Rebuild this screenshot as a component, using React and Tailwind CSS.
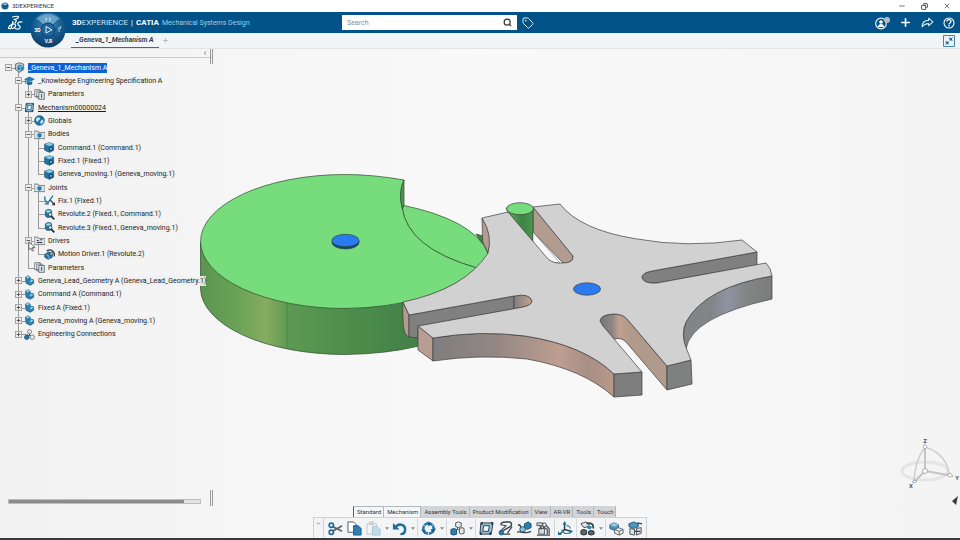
import { ChevronDown, ChevronLeft, Copy, Minus, Plus, Search, Tag, X } from "lucide-react";

const tree = {
  label: "_Geneva_1_Mechanism A",
  icon: "product",
  selected: true,
  children: [
    {
      label: "_Knowledge Engineering Specification A",
      icon: "knowledge",
      children: [{ label: "Parameters", icon: "params", closed: true }],
    },
    {
      label: "Mechanism00000024",
      icon: "mechanism",
      underline: true,
      children: [
        { label: "Globals", icon: "globe", closed: true },
        {
          label: "Bodies",
          icon: "folder",
          children: [
            { label: "Command.1 (Command.1)", icon: "body" },
            { label: "Fixed.1 (Fixed.1)", icon: "body" },
            { label: "Geneva_moving.1 (Geneva_moving.1)", icon: "body" },
          ],
        },
        {
          label: "Joints",
          icon: "folder",
          children: [
            { label: "Fix.1 (Fixed.1)", icon: "fix" },
            { label: "Revolute.2 (Fixed.1, Command.1)", icon: "revolute" },
            { label: "Revolute.3 (Fixed.1, Geneva_moving.1)", icon: "revolute" },
          ],
        },
        {
          label: "Drivers",
          icon: "drivers",
          children: [{ label: "Motion Driver.1 (Revolute.2)", icon: "motor" }],
        },
        { label: "Parameters", icon: "params" },
      ],
    },
    { label: "Geneva_Lead_Geometry A (Geneva_Lead_Geometry.1)", icon: "part", closed: true },
    { label: "Command A (Command.1)", icon: "part", closed: true },
    { label: "Fixed A (Fixed.1)", icon: "part", closed: true },
    { label: "Geneva_moving A (Geneva_moving.1)", icon: "part", closed: true },
    { label: "Engineering Connections", icon: "connections", closed: true },
  ],
};

// Walk the tree into rows. "guides" says, per level, if the line goes on below the row.
const flatten = (node, guides = []) => [
  { ...node, guides },
  ...(node.children || []).flatMap((child, i) =>
    flatten(child, [...guides, i < node.children.length - 1])
  ),
];

const rows = flatten(tree);

const treeIcons = {
  product: (
    <>
      <path d="M2 3 8 1l6 2v8l-6 4-6-4z" fill="#c3cdd4" stroke="#38434b" />
      <path d="M5 5l4-1 4 2v5l-4 2-4-2z" fill="#1f7eb0" />
      <path d="M5 5l4 2 4-1M9 7v6" stroke="#b5e0f2" fill="none" />
    </>
  ),
  knowledge: (
    <>
      <path d="M0 6 8 2l8 4-8 4z" fill="#1f7fb2" />
      <path d="M4 9v4c2 2 6 2 8 0V9l-4 2z" fill="#155f8a" />
      <path d="M2 7v6" stroke="#155f8a" />
    </>
  ),
  params: (
    <>
      <path d="M1 1h8v10H1zM4 3h8v10H4z" fill="#f3f3f3" stroke="#4d565c" />
      <path d="M7 5h8v10H7z" fill="#e8edf0" stroke="#38434b" />
      <path d="M10 7h2v6h-2z" fill="#1f7fb2" />
    </>
  ),
  mechanism: (
    <>
      <path d="M3 2h11l-1 12H2z" fill="#7ab9d8" stroke="#263640" />
      <path d="M6 5h5l-1 6H5z" fill="#f5f5f5" stroke="#1c5f88" />
      <path d="M3 2h2v2H3zM12 2h2v2h-2zM2 12h2v2H2zM11 12h2v2h-2z" fill="#263640" />
    </>
  ),
  globe: (
    <>
      <circle cx="8" cy="8" r="7" fill="#1c74a5" stroke="#134c6e" />
      <path d="M3 5c3-3 5-2 6 0s-3 2-3 4-2 1-3-1zM9 9l4-3 1 4-4 4z" fill="#bfe1f0" />
    </>
  ),
  folder: (
    <>
      <path d="M0 3h6l1 2h9v9H0z" fill="#dde1e4" stroke="#596167" />
      <path d="M5 7l3-1 3 1v4l-3 2-3-2z" fill="#1f7fb2" />
    </>
  ),
  drivers: (
    <>
      <path d="M0 3h6l1 2h9v9H0z" fill="#dde1e4" stroke="#596167" />
      <path d="M4 8h3M9 7h3M4 11h8" stroke="#333d44" strokeWidth="1.5" />
    </>
  ),
  body: (
    <>
      <path d="M1 3 8 1l6 2v9l-6 3-7-3z" fill="#1f78a8" stroke="#174c69" />
      <path d="M1 3l7 3 6-3-6-2z" fill="#8fcbe4" />
      <path d="M8 6v9" stroke="#174c69" />
      <circle cx="10" cy="10" r="2.500" fill="#6fb2d2" stroke="#132733" strokeWidth="1.200" />
    </>
  ),
  fix: (
    <>
      <path d="M1 2c0 6 2 9 6 9M6 11 13 1" stroke="#1f78a8" strokeWidth="2" fill="none" />
      <path d="M1 13h6" stroke="#174c69" strokeWidth="1.600" />
      <path d="M9 7l5 6" stroke="#263640" strokeWidth="1.800" />
      <path d="M11 15h5v-5z" fill="#263640" />
    </>
  ),
  revolute: (
    <>
      <path d="M2 3c2-3 8-3 9 0v7c-2 3-7 3-9 0z" fill="#1f78a8" stroke="#174c69" />
      <ellipse cx="6.500" cy="3.500" rx="3.500" ry="1.800" fill="#a8d7eb" />
      <circle cx="9" cy="8" r="2.500" fill="#e8f2f7" stroke="#1b2a33" />
      <path d="M10 10l5 5" stroke="#1b2a33" strokeWidth="2.400" />
    </>
  ),
  motor: (
    <>
      <path d="M1 8l6-4 5 3v5l-6 3-5-3z" fill="#1f78a8" stroke="#174c69" />
      <path d="M4 3c4-3 9-2 11 3v5" stroke="#263640" strokeWidth="1.800" fill="none" />
      <circle cx="11" cy="7" r="2.500" fill="#a9b4ba" stroke="#263640" />
      <path d="M3 8l4 2v4" stroke="#8fcbe4" fill="none" />
    </>
  ),
  part: (
    <>
      <path d="M2 3l4-2 3 2v3l5 1v5l-5 3-6-3z" fill="#2a80af" stroke="#1f5a7c" />
      <path d="M2 3l4-2 3 2-4 2zM8 9l3-2 3 1-4 3z" fill="#8fcbe4" />
    </>
  ),
  connections: (
    <>
      <path d="M8 5v4M8 9l-4 2M8 9l4 2" stroke="#4d565c" strokeWidth="1.500" />
      <circle cx="8" cy="4" r="3" fill="#e3e8eb" stroke="#59646b" />
      <circle cx="4" cy="12" r="3.300" fill="#1f78a8" stroke="#174c69" />
      <circle cx="12" cy="12" r="3.300" fill="#e3e8eb" stroke="#59646b" />
    </>
  ),
};

const TreeRow = ({ row }) => {
  const level = row.guides.length;
  const hasToggle = row.children || row.closed;

  return (
    <li className="flex items-stretch" role="treeitem" aria-level={level + 1}>
      {/* Guide lines of the parents */}
      {Array.from({ length: level }).map((_, i) => (
        <span key={i} className="relative w-[10px] shrink-0">
          {i > 0 && row.guides[i - 1] && (
            <span className="absolute inset-y-0 left-[5px] w-px bg-[#9a9a9a]" />
          )}
        </span>
      ))}
      <span className="relative flex w-[10px] shrink-0 items-center justify-center">
        {level > 0 && <span className="absolute top-0 left-[5px] h-1/2 w-px bg-[#9a9a9a]" />}
        {level > 0 && row.guides[level - 1] && (
          <span className="absolute bottom-0 left-[5px] h-1/2 w-px bg-[#9a9a9a]" />
        )}
        <span className="absolute top-1/2 left-[5px] h-px w-[10px] bg-[#9a9a9a]" />
        {hasToggle && (
          <button
            aria-label={row.closed ? `Expand ${row.label}` : `Collapse ${row.label}`}
            className="relative flex size-[7px] shrink-0 items-center justify-center border border-[#a5a5a5] bg-[#ececec] text-[#444]"
          >
            {row.closed ? <Plus className="size-[5px]" strokeWidth={4} /> : <Minus className="size-[5px]" strokeWidth={4} />}
          </button>
        )}
      </span>
      <span className="relative flex items-center gap-[3px] pl-[1px]">
        {row.children && (
          <span className="absolute bottom-0 left-[5px] h-1/2 w-px bg-[#9a9a9a]" />
        )}
        <svg viewBox="0 0 16 16" className="relative size-[11px] shrink-0" fill="none">
          {treeIcons[row.icon]}
        </svg>
        <span
          className={`text-[7px] leading-[10px] whitespace-nowrap ${
            row.selected ? "bg-[#0a64d8] text-white" : "bg-[#f1f1f1]/90 text-[#1d1d1d]"
          } ${row.underline ? "underline" : ""}`}
        >
          {row.label}
        </span>
      </span>
    </li>
  );
};

const ModelTree = () => (
  <aside className="relative flex w-[213px] flex-col">
    <div className="flex h-[9px] items-center justify-end border-b border-[#c9c9c9] pr-[5px]">
      <button aria-label="Hide tree">
        <ChevronLeft className="size-[6px] text-[#666]" strokeWidth={3} />
      </button>
    </div>
    <span className="absolute top-0 right-0 h-[15px] w-[3px] border-x border-[#9a9a9a]" />
    <ul role="tree" className="mt-[3px] ml-[3px] grid h-[280px] auto-rows-fr">
      {rows.map((row, i) => (
        <TreeRow key={i} row={row} />
      ))}
    </ul>
    <div className="mt-auto mb-[34px] ml-[8px] h-[5px] w-[193px] border border-[#bdbdbd] bg-[#e4e4e4]">
      <div className="h-full w-11/12 bg-[#8b8b8b]" />
    </div>
    <span className="absolute right-0 bottom-[32px] h-[16px] w-[3px] border-x border-[#9a9a9a]" />
  </aside>
);

const MechanismView = () => (
  <svg
    viewBox="0 49 960 489"
    className="absolute inset-0 h-full w-full"
    fontFamily="Roboto, sans-serif"
    role="img"
    aria-label="Geneva mechanism"
  >
    <defs>
      <linearGradient id="rim" gradientUnits="userSpaceOnUse" x1="200" x2="420" y1="0" y2="0">
        <stop offset="0" stopColor="#5a9450" />
        <stop offset=".17" stopColor="#6aa357" />
        <stop offset=".3" stopColor="#87ab60" />
        <stop offset=".4" stopColor="#5d9a53" />
        <stop offset=".65" stopColor="#4e8f4c" />
        <stop offset="1" stopColor="#428046" />
      </linearGradient>
      <linearGradient id="front" gradientUnits="userSpaceOnUse" x1="433" x2="614" y1="0" y2="0">
        <stop offset="0" stopColor="#7f7e7e" />
        <stop offset=".35" stopColor="#948783" />
        <stop offset=".7" stopColor="#be9e90" />
        <stop offset=".85" stopColor="#a88f85" />
        <stop offset="1" stopColor="#b69a8a" />
      </linearGradient>
      <linearGradient id="back" gradientUnits="userSpaceOnUse" x1="683" x2="772" y1="0" y2="0">
        <stop offset="0" stopColor="#858585" />
        <stop offset=".3" stopColor="#828486" />
        <stop offset=".5" stopColor="#8d94a2" />
        <stop offset=".7" stopColor="#848587" />
        <stop offset="1" stopColor="#7b7b7b" />
      </linearGradient>
      <linearGradient id="slot" gradientUnits="userSpaceOnUse" x1="600" x2="630" y1="0" y2="0">
        <stop offset="0" stopColor="#777" />
        <stop offset=".4" stopColor="#8d8682" />
        <stop offset=".65" stopColor="#c29f90" />
        <stop offset="1" stopColor="#b09a8c" />
      </linearGradient>
      <linearGradient id="slotEnd" gradientUnits="userSpaceOnUse" x1="514" x2="532" y1="0" y2="0">
        <stop offset="0" stopColor="#817f7e" />
        <stop offset="1" stopColor="#c3a293" />
      </linearGradient>
      <linearGradient id="pin" gradientUnits="userSpaceOnUse" x1="510" x2="533" y1="0" y2="0">
        <stop offset="0" stopColor="#5ba653" />
        <stop offset=".5" stopColor="#3e8444" />
        <stop offset="1" stopColor="#4b9550" />
      </linearGradient>
    </defs>

    {/* Driving wheel */}
    <g stroke="#2c4a30" strokeWidth=".7" strokeLinejoin="round">
      <path d="M200.500 242V288A144.500 66.500 0 0 0 345 354.500Q386 354 419 346V300H345Z" fill="url(#rim)" />
      <path d="M287 303V348" stroke="#3c7740" strokeWidth=".5" />
      <path d="M476 234l7 2v14h5v4z" fill="#3f8444" />
      <path d="M402 205Q474 220 488 253Q487 262 477 268Q407 248 402 207Z" fill="#77dc7c" />
      <path d="M404 180Q373 174.500 345 174.500A144.500 67 0 0 0 345 308.500Q434 307 477 268Q407 248 402 207Q398 193 404 180Z" fill="#77dc7c" />
      <path d="M404 180Q398 193 402.500 209L404 205Z" fill="#4f9852" />
      <path d="M332 240.500v2a13.500 6.500 0 0 0 27 0v-2z" fill="#173d86" />
      <ellipse cx="345.500" cy="240.500" rx="13.500" ry="6.200" fill="#2b7bf0" />
    </g>

    {/* Geneva wheel, walls first and the top face over them */}
    <g stroke="#3c3c3c" strokeWidth=".7" strokeLinejoin="round">
      <path d="M482 218Q491 231 490.500 243L488 253L482.500 241Z" fill="#b39b91" />
      <path d="M533 207L573 256Q574 263 563 263L533 232Z" fill="#b29c90" />
      <path d="M508 212L533 243V208H506Z" fill="url(#pin)" />
      <path d="M533 232V243L549 262L560 263Z" fill="#f8f8f8" strokeWidth=".4" />
      <path d="M403 302L409 315V337L406 335Q402 330 403 302Z" fill="#b49b91" />
      <path d="M409 315L514 296V309L418 327V338L409 337Z" fill="#808080" />
      <path d="M514 296Q530 293 532 301Q532 306 518 308L514 309Z" fill="url(#slotEnd)" />
      <path d="M418 326L433 338V361L418 350Z" fill="#b79d92" />
      <path d="M433 338Q480 330 525 336Q584 345 614 374V397Q583 369 527 359Q480 354 433 361Z" fill="url(#front)" />
      <path d="M614 374L642 372V395L614 397Z" fill="#7e7e7e" />
      <path d="M600 321Q600 315 613 314Q623 314 627 319L667 366V390L626 342Q621 337 615 339L603 326Z" fill="url(#slot)" />
      <path d="M667 366L691 360L692 384L667 390Z" fill="#7f8080" />
      <path d="M652 271L757 252V265L657 283Q644 284 642 278Q641 273 652 271Z" fill="#808080" />
      <path d="M772 276Q705 287 686 322Q681 336 686 349Q691 317 772 299Z" fill="url(#back)" />
      <path
        d="M482 218L508 212L548 259Q554 264 563 263Q574 263 573 256L533 207L560 204Q580 230 637 239Q687 248 742 240L757 252L652 271Q641 273 642 278Q644 284 657 283L766 263Q771 268 772 276Q705 287 686 322Q680 334 687 350L691 360L667 366L627 319Q623 314 613 314Q600 315 600 321L603 326L642 372L614 374Q584 345 525 336Q480 330 433 338L418 326L518 308Q532 306 532 301Q530 293 514 296L409 315L403 302Q465 289 488 253Q493 235 482 218Z"
        fill="#d1d1d2"
      />
      <ellipse cx="587" cy="289" rx="13.500" ry="6.200" fill="#2b7bf0" />
      <ellipse cx="520" cy="208.700" rx="13.500" ry="6" fill="#77dc7c" />
    </g>

    {/* Axis robot */}
    <g fill="none" stroke="#cfcfcf">
      <ellipse cx="925" cy="471" rx="23" ry="9" stroke="#e5e5e5" strokeWidth="3" />
      <path d="M925 447Q947 454 949 475M925 447Q915 460 914 481" strokeWidth="1.500" />
      <path d="M925 471V448M925 471L948 475M925 471L915 481" stroke="#c4c4c4" strokeWidth="2" />
      <g fill="#fff" stroke="#9b9b9b" strokeWidth=".8">
        <circle cx="925" cy="471" r="2.500" />
        <path d="M925 444l2 3-2 2-2-2zM947 475l3-2 3 3-3 1zM912 482l2-2 3 1-2 2z" />
      </g>
    </g>
    <g fontSize="6" fontWeight="700" fill="#555" textAnchor="middle">
      <text x="925" y="443">Z</text>
      <text x="957" y="480">Y</text>
      <text x="911" y="488">X</text>
    </g>
    <path d="M958 496l-6 5 2 2 2 2z" fill="#3b3b3b" />
  </svg>
);

const toolIcons = {
  cut: (
    <>
      <path d="M5 6l10 5M5 11l10-6" stroke="#5d666c" strokeWidth="1.800" />
      <circle cx="3.500" cy="4.500" r="2.300" stroke="#1d6c9c" strokeWidth="1.800" />
      <circle cx="3.500" cy="12" r="2.300" stroke="#1d6c9c" strokeWidth="1.800" />
    </>
  ),
  copy: (
    <>
      <path d="M1 1h6l3 3v8H1z" fill="#fff" stroke="#4b555c" />
      <path d="M7 5h5l3 3v7H7z" fill="#2d80b1" stroke="#1a5d86" />
    </>
  ),
  paste: (
    <>
      <path d="M1 3h10v11H1z" fill="#f3f3f3" stroke="#bfc4c7" />
      <path d="M4 1h4v3H4z" fill="#d5d8da" stroke="#bfc4c7" />
      <path d="M7 6h5l3 3v6H7z" fill="#c3dcea" stroke="#a3c3d6" />
    </>
  ),
  undo: (
    <>
      <path d="M4 6c4-4 10-2 10 3 0 3-2 5-5 5" stroke="#1d6c9c" strokeWidth="2.600" />
      <path d="M1 2v7h7z" fill="#1d6c9c" />
    </>
  ),
  update: (
    <>
      <circle cx="8" cy="8" r="5.500" stroke="#2a78a8" strokeWidth="2.800" />
      <path d="M7 0l4 3-3 3zM16 8l-3 5-3-4zM4 14 0 9l5 1z" fill="#1d5f88" />
      <path d="M2 4l3 2M13 4l-2 2M8 15v-3" stroke="#cfe3ee" />
    </>
  ),
  cluster: (
    <>
      <path d="M8 5v4l-4 2M8 9l4 1" stroke="#4c565d" />
      <path d="M6 2l3-1 3 1v4L9 7 6 6z" fill="#e8ebed" stroke="#4c565d" />
      <path d="M1 9l3-1 3 1v5l-3 1-3-1z" fill="#2d80b1" stroke="#17506f" />
      <path d="M10 8l3-1 2 1v5l-3 1-2-1z" fill="#e3e6e8" stroke="#4c565d" />
    </>
  ),
  mechanism: (
    <>
      <path d="M2 2h13l-2 12H1z" fill="#8fc3dd" stroke="#313d45" />
      <path d="M5 5h6l-1 6H4z" fill="#f4f5f6" stroke="#313d45" />
      <path d="M2 1h2v3H2zM13 1h2v3h-2zM1 12h2v3H1zM11 12h2v3h-2z" fill="#313d45" />
    </>
  ),
  joint: (
    <>
      <path d="M3 4c0-3 3-3 5-3h4c3 0 3 4 1 5L6 10c-2 1-2 4 0 4h7" stroke="#39434a" strokeWidth="1.500" />
      <path d="M15 6l-5 7M3 4l6 1M2 11l7-6" stroke="#39434a" strokeWidth="1.200" />
      <circle cx="3.500" cy="12.500" r="2.300" fill="#2d80b1" stroke="#17506f" />
    </>
  ),
  belt: (
    <>
      <path d="M8 3l4-2 3 2v4l-4 2-3-2z" fill="#2d80b1" stroke="#17506f" />
      <circle cx="6" cy="9" r="3" fill="#8ec1dc" stroke="#17506f" />
      <path d="M1 4c2 0 3 1 3 3M0 12c5-2 8 3 15-1" stroke="#39434a" strokeWidth="1.400" />
    </>
  ),
  robot: (
    <>
      <path d="M10 4l4 4v6M7 6l5 3v5M1 15h14" stroke="#465057" strokeWidth="1.300" />
      <path d="M1 2h6v3H1zM3 8h6v6H3z" fill="#d5dadd" stroke="#465057" />
      <path d="M5 5v4" stroke="#465057" strokeWidth="2" />
      <circle cx="9" cy="4" r="2" fill="#e8ebed" stroke="#39434a" />
    </>
  ),
  axes: (
    <>
      <path d="M7 1v8l7 2M7 9l-5 5" stroke="#263640" strokeWidth="1.500" />
      <path d="M5 4l2-4 2 4zM12 9l4 2-4 3zM0 11v4h4z" fill="#1d6c9c" />
      <path d="M9 5c3 0 4 2 4 3M4 9c1 3 4 5 8 4" stroke="#2d80b1" strokeWidth="1.300" />
    </>
  ),
  simulate: (
    <>
      <path d="M1 3l5-2 4 2-1 3-5 1z" fill="#e3e6e8" stroke="#39434a" />
      <path d="M7 3c4-2 8 0 7 5" stroke="#39434a" strokeWidth="1.800" />
      <path d="M7 6l3-1 3 1-2 3-3-1z" fill="#2d80b1" />
      <path d="M1 10l3-1 3 1v4l-3 1-3-1zM9 11l3-1 3 1v3l-3 1-3-1z" fill="#59636a" stroke="#263036" />
    </>
  ),
  section: (
    <>
      <path d="M1 4l4-2 5 2v4l-4 2-5-2z" fill="#4b97bf" stroke="#265c7a" />
      <path d="M1 4l4-2 5 2-4 2z" fill="#9ccbe2" />
      <path d="M6 9l4-2 5 2v4l-4 2-5-2z" fill="#e9ecee" stroke="#59636a" />
      <path d="M6 9l5 2 4-2M11 11v4" stroke="#59636a" />
    </>
  ),
  measure: (
    <>
      <path d="M1 3l5-2 5 2v3L6 8 1 6z" fill="#4b97bf" stroke="#265c7a" />
      <path d="M2 8v6l5 1V9zM9 8l5-1v6l-5 2z" fill="#dde1e3" stroke="#465057" />
      <path d="M10 2l5 1M7 11h6" stroke="#39434a" strokeWidth="1.300" />
    </>
  ),
};

const tools = [
  "cut", "copy", "paste", "caret", "undo", "caret", "sep", "update", "caret", "sep",
  "cluster", "caret", "sep", "mechanism", "joint", "belt", "robot", "sep", "axes", "sep",
  "simulate", "caret", "sep", "section", "measure",
];

const toolTabs = ["Standard", "Mechanism", "Assembly Tools", "Product Modification", "View", "AR-VR", "Tools", "Touch"];

const ActionBar = () => (
  <div className="absolute bottom-0 left-1/2 -translate-x-1/2">
    <div className="ml-[40px] flex w-max rounded-tr-[3px] bg-[#d2d4d7]" role="tablist">
      {toolTabs.map((tab, i) => (
        <button
          key={tab}
          role="tab"
          aria-selected={i === 1}
          className={`h-[11px] border-r border-[#b5b8bb] pr-[2px] pl-[3px] text-[6px] leading-[10px] whitespace-nowrap text-[#333] ${
            i < 2 ? "border-t bg-[#f5f6f7]" : ""
          } ${i === 0 ? "border-l border-l-[#1d6c9c]" : ""}`}
        >
          {tab}
        </button>
      ))}
    </div>
    <div className="flex h-[21px] w-[334px] border border-b-0 border-[#cfd1d3] bg-[#f3f4f5]">
      <button aria-label="Hide action bar" className="flex w-[10px] justify-center border-r border-[#cfd1d3] pt-[3px]">
        <ChevronDown className="size-[5px] text-[#555]" strokeWidth={3} />
      </button>
      <div className="flex items-center pl-[2px]">
        {tools.map((tool, i) => {
          if (tool === "sep") return <span key={i} className="mx-[1px] h-[18px] w-px bg-[#d6d8da]" />;
          if (tool === "caret") {
            return (
              <button key={i} aria-label="More" className="flex w-[7px] justify-center">
                <svg viewBox="0 0 6 4" className="h-[3px] w-[4px]">
                  <path d="M0 0h6L3 4z" fill="#888" />
                </svg>
              </button>
            );
          }
          return (
            <button key={i} aria-label={tool} className="flex w-[19px] justify-center">
              <svg viewBox="0 0 16 16" className="size-[15px]" fill="none">
                {toolIcons[tool]}
              </svg>
            </button>
          );
        })}
      </div>
    </div>
  </div>
);

const Compass = () => (
  <button aria-label="Compass" className="absolute top-0 left-[30px] z-10">
    <svg viewBox="0 0 36 36" className="size-[36px]" fontFamily="Noto Sans, sans-serif">
      <defs>
        <radialGradient id="ball" cx=".5" cy=".3" r=".7">
          <stop offset="0" stopColor="#4c93bf" />
          <stop offset=".5" stopColor="#1a6297" />
          <stop offset="1" stopColor="#0a3c66" />
        </radialGradient>
      </defs>
      <circle cx="18" cy="18" r="17.500" fill="url(#ball)" />
      <path d="M6 7a17 17 0 0 1 24 0l-7 6a7 7 0 0 0-10 0z" fill="#7db2d2" opacity=".7" />
      <path d="M7 7l22 22M29 7 7 29" stroke="#0b3f6b" strokeWidth=".7" />
      <circle cx="18" cy="18" r="7" fill="#1c659b" stroke="#0b3f6b" />
      <path d="M16 14.500v6.500l6-3.200z" fill="none" stroke="#e3eff7" />
      <path d="M15 6l2 1-2 2M19 6l2 1-2 2M29 15v5M31 14l-1 3" stroke="#dcebf4" fill="none" strokeWidth=".8" />
      <g fontSize="5" fontWeight="700" fill="#fff" textAnchor="middle">
        <text x="7.500" y="19.500">3D</text>
        <text x="18.500" y="30.500">V,R</text>
      </g>
    </svg>
  </button>
);

const TitleBar = () => (
  <div className="flex h-[12px] shrink-0 items-center bg-white pl-[1px] text-[#333]">
    <svg viewBox="0 0 10 10" className="size-[8px]">
      <circle cx="5" cy="5" r="4.500" fill="#1f6c9f" />
      <path d="M2 2h6L5 5z" fill="#9cc8e0" />
      <path d="M1 5h8M5 5v4" stroke="#093a5d" />
    </svg>
    <span className="ml-[3px] text-[6px] leading-[10px]">3DEXPERIENCE</span>
    <div className="ml-auto flex items-center gap-[15px] pr-[9px]">
      <button aria-label="Minimize"><Minus className="size-[8px]" /></button>
      <button aria-label="Restore"><Copy className="size-[7px] -scale-x-100" strokeWidth={3} /></button>
      <button aria-label="Close"><X className="size-[8px]" /></button>
    </div>
  </div>
);

const TopBar = () => (
  <header className="relative flex h-[21px] shrink-0 items-center bg-[#005288] text-white">
    <Compass />
    <div className="flex w-[342px] shrink-0 items-center pl-[7px]">
      <svg viewBox="0 0 32 32" className="size-[16px]" fill="none" stroke="#fff" strokeWidth="2.400" strokeLinecap="round" strokeLinejoin="round">
        <path d="M11 4c6-2 12-2 12 0s-5 4-9 5c5 0 6 3 2 7" />
        <path d="M12 13 8 27c-3 1-6 0-5-2 2-5 12-10 14-5 1 3-3 6-6 7" />
        <path d="M30 14c-6-1-10 2-8 5s6 4 4 7-7 2-10 1" />
      </svg>
      <h1 className="ml-[49px] flex items-center text-[8px] leading-[12px] whitespace-nowrap">
        <b>3D</b>
        <span className="text-[#d5e5f0]">EXPERIENCE</span>
        <span className="mx-[3px]">|</span>
        <b>CATIA</b>
        <span className="ml-[3px] text-[7px] text-[#a4cbe5]">Mechanical Systems Design</span>
      </h1>
    </div>
    <label className="flex h-[15px] w-[175px] items-center bg-white px-[5px]">
      <input
        type="text"
        aria-label="Search"
        placeholder="Search"
        className="min-w-0 flex-1 text-[7px] leading-[10px] text-[#333] outline-none placeholder:text-[#8e8e8e]"
      />
      <Search className="size-[9px] text-[#333]" strokeWidth={3} />
    </label>
    <button aria-label="Tags" className="ml-[5px]"><Tag className="size-[12px] text-[#d6ebf7]" /></button>
    <div className="ml-auto flex items-center gap-[9px] pr-[5px]">
      <button aria-label="Profile">
        <svg viewBox="0 0 17 14" className="h-[14px] w-[17px]" fill="none">
          <circle cx="8" cy="7.500" r="5.300" stroke="#e3f0f8" strokeWidth="1.200" />
          <circle cx="8" cy="6" r="1.800" fill="#fff" />
          <path d="M5 11c0-4 6-4 6 0z" fill="#fff" />
          <circle cx="14" cy="4" r="3" fill="#b3bcc9" />
        </svg>
      </button>
      <button aria-label="Add"><Plus className="size-[13px]" strokeWidth={3} /></button>
      <button aria-label="Share">
        <svg viewBox="0 0 24 24" className="size-[13px]" fill="none" stroke="#d6ebf7" strokeWidth="2" strokeLinejoin="round">
          <path d="M14 4l8 7-8 7v-4C8 14 5 16 2 20c0-7 4-12 12-12z" />
        </svg>
      </button>
      <button aria-label="Help">
        <svg viewBox="0 0 24 24" className="size-[12px]" fill="none" stroke="#fff" strokeWidth="2.200">
          <circle cx="12" cy="12" r="10" />
          <path d="M8 9c0-5 8-5 8 0 0 3-4 3-4 6M12 16v3" strokeWidth="2.600" />
        </svg>
      </button>
    </div>
  </header>
);

const DocumentTabs = () => (
  <nav className="flex h-[16px] shrink-0 items-center border-b border-[#e2e4e6] bg-[#f2f5f8] pl-[71px]">
    <a href="#geneva" className="h-[14px] border-b border-[#2672a8] px-[5px] text-[7px] leading-[13px] font-bold whitespace-nowrap text-[#3c3c3c] italic">
      _Geneva_1_Mechanism A
    </a>
    <button aria-label="New tab" className="ml-[3px]"><Plus className="size-[7px] text-[#9a9fa3]" /></button>
    <button aria-label="Exit full view" className="mr-[5px] ml-auto">
      <svg viewBox="0 0 12 12" className="size-[12px]">
        <path d="M.5.5h11v11H.5z" fill="#e9f3f9" stroke="#4285ad" />
        <path d="M6.500 2v3.500H10zM2 6.500h3.500V10z" fill="#13608f" />
        <path d="M9.500 2.500l-2 2M2.500 9.500l2-2" stroke="#13608f" />
      </svg>
    </button>
  </nav>
);

export default function App() {
  return (
    <div className="flex h-screen flex-col overflow-hidden bg-[#f5f5f5] font-[Roboto,sans-serif]">
      <TitleBar />
      <TopBar />
      <DocumentTabs />
      <main className="relative flex min-h-0 flex-1 bg-linear-to-r from-[#f2f2f2] via-[#f9f9f9] to-[#f4f4f4]">
        <MechanismView />
        <ModelTree />
        {/* Mouse pointer */}
        <svg viewBox="0 0 10 14" className="absolute top-[192px] left-[28px] h-[11px] w-[8px]">
          <path d="M1 1v10l2.500-2 2 4 1.500-1-2-3.500H9z" fill="#fff" stroke="#444" />
        </svg>
        <ActionBar />
      </main>
      <div className="h-[2px] shrink-0 bg-[#3a3a3a]" />
    </div>
  );
}
